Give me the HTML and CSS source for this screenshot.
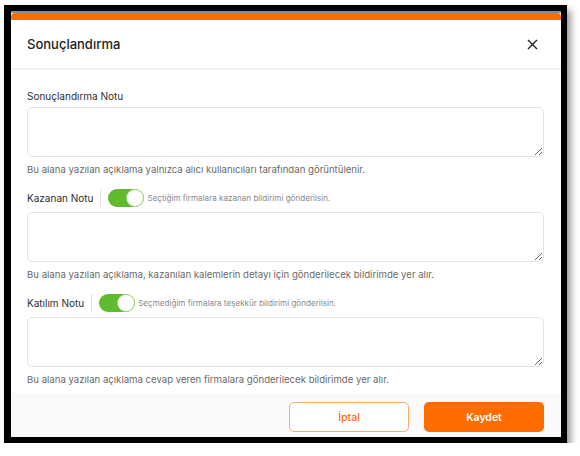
FILE: index.html
```html
<!DOCTYPE html>
<html lang="tr">
<head>
    <meta charset="UTF-8">
    <meta name="viewport" content="width=device-width, initial-scale=1.0">
    <title>Sonuçlandırma</title>
    <link rel="stylesheet" href="styles.css">
</head>
<body>
    <div class="frame">
        <div class="screen">
            <div class="page-strip"></div>
            <div class="modal">
                <div class="modal-header">
                    <span class="modal-title">Sonuçlandırma</span>
                    <svg class="close" width="11" height="11" viewBox="0 0 11 11">
                        <path d="M1 1L10 10M10 1L1 10" stroke="#222" stroke-width="1.4" fill="none"/>
                    </svg>
                </div>
                <div class="modal-body">
                    <div class="field">
                        <label class="label first">Sonuçlandırma Notu</label>
                        <textarea></textarea>
                        <p class="hint">Bu alana yazılan açıklama yalnızca alıcı kullanıcıları tarafından görüntülenir.</p>
                    </div>
                    <div class="field">
                        <div class="label-row">
                            <label class="label">Kazanan Notu</label>
                            <span class="sep"></span>
                            <span class="switch"><span class="knob"></span></span>
                            <span class="switch-text">Seçtiğim firmalara kazanan bildirimi gönderilsin.</span>
                        </div>
                        <textarea></textarea>
                        <p class="hint">Bu alana yazılan açıklama, kazanılan kalemlerin detayı için gönderilecek bildirimde yer alır.</p>
                    </div>
                    <div class="field">
                        <div class="label-row">
                            <label class="label">Katılım Notu</label>
                            <span class="sep"></span>
                            <span class="switch"><span class="knob"></span></span>
                            <span class="switch-text">Seçmediğim firmalara teşekkür bildirimi gönderilsin.</span>
                        </div>
                        <textarea></textarea>
                        <p class="hint">Bu alana yazılan açıklama cevap veren firmalara gönderilecek bildirimde yer alır.</p>
                    </div>
                </div>
                <div class="modal-footer">
                    <button class="btn btn-outline">İptal</button>
                    <button class="btn btn-primary">Kaydet</button>
                </div>
            </div>
        </div>
    </div>
</body>
</html>
```

FILE: styles.css
```css
body {
    margin: 0;
    background: #fff;
    font-family: Inter, "Noto Sans", sans-serif;
}
.frame {
    width: 550px;
    height: 426px;
    margin: 5px 0 0 4px;
    border: 6px solid #000;
    border-left-width: 7px;
    box-shadow: 4px 5px 7px rgba(0, 0, 0, 0.4);
}
.screen {
    height: 100%;
    background: #fafafa;
    overflow: hidden;
}
.page-strip {
    height: 2px;
    background: #8c8c8c;
}
.modal {
    background: #fff;
    border-top: 7px solid #ff6d00;
    border-radius: 4px 4px 0 0;
}
.modal-header {
    height: 48px;
    display: flex;
    align-items: center;
    justify-content: space-between;
    padding: 0 23px 0 16px;
    border-bottom: 2px solid #f2f2f2;
}
.modal-title {
    font-size: 13px;
    font-weight: 500;
    color: #222;
}
.modal-body {
    padding: 18px 17px 6px 16px;
}
.label {
    display: block;
    font-size: 10px;
    font-weight: 400;
    color: #2e2e2e;
    line-height: 16px;
}
.label.first {
    margin-bottom: 3px;
}
.label-row {
    display: flex;
    align-items: center;
    height: 18px;
    margin: 12px 0 5px;
}
.sep {
    width: 1px;
    height: 18px;
    background: #e2e2e2;
    margin: 0 7px 0 7px;
}
.switch {
    width: 36px;
    height: 18px;
    border-radius: 9px;
    background: #5fba2d;
    display: flex;
    align-items: center;
    justify-content: flex-end;
    box-sizing: border-box;
    padding-right: 1px;
}
.knob {
    width: 16px;
    height: 16px;
    border-radius: 50%;
    background: #fff;
    box-shadow: 0 0 0 1px #a9d98c;
}
.switch-text {
    font-size: 8.1px;
    color: #8a8a8a;
    margin-left: 3px;
}
textarea {
    display: block;
    width: 100%;
    height: 50px;
    box-sizing: border-box;
    border: 1px solid #e4e4e4;
    border-radius: 5px;
    resize: vertical;
    background: #fff;
}
.hint {
    margin: 6px 0 0;
    font-size: 9.6px;
    line-height: 14px;
    color: #6a6a6a;
}
.modal-footer {
    background: #fafafa;
    display: flex;
    justify-content: flex-end;
    gap: 15px;
    padding: 9px 17px;
}
.btn {
    width: 120px;
    height: 30px;
    border-radius: 5px;
    font-family: Inter, "Noto Sans", sans-serif;
    font-size: 10.5px;
    font-weight: 600;
    cursor: pointer;
}
.btn-outline {
    background: #fff;
    border: 1px solid #ffab6e;
    color: #ff6d00;
    font-weight: 500;
}
.btn-primary {
    background: #ff6d00;
    border: none;
    color: #fff;
}
```
